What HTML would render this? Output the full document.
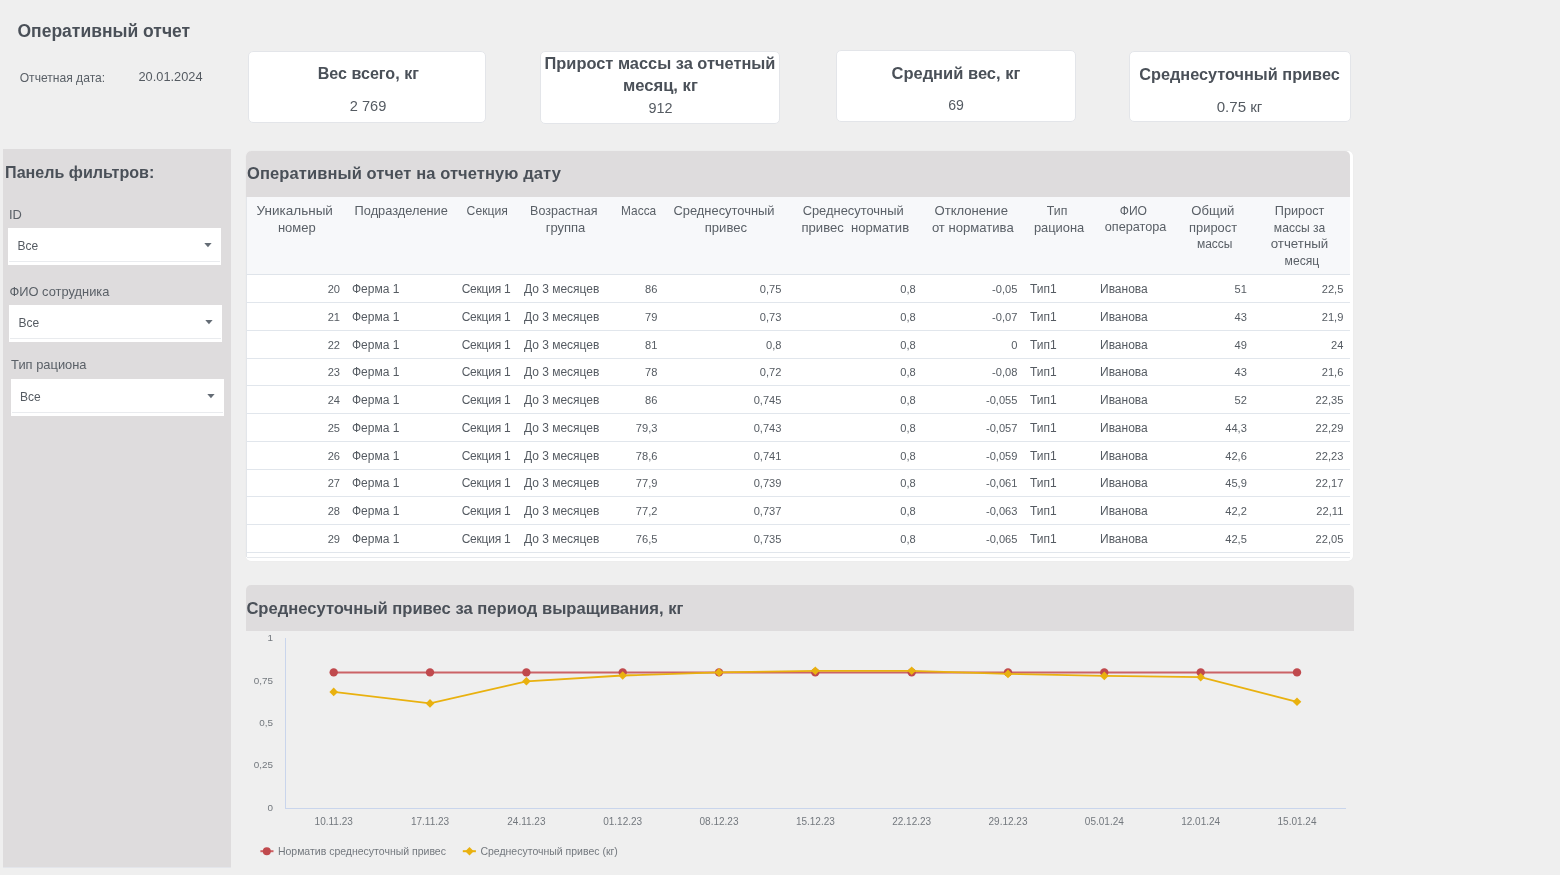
<!DOCTYPE html>
<html><head><meta charset="utf-8"><title>Оперативный отчет</title>
<style>
html,body{margin:0;padding:0;}
body{width:1560px;height:875px;background:#efefef;position:relative;overflow:hidden;font-family:"Liberation Sans",sans-serif;}
.t{position:absolute;white-space:nowrap;}
#root{position:absolute;left:0;top:0;width:1560px;height:875px;will-change:transform;}
.b{position:absolute;}
</style></head><body><div id="root">
<div class="t" style="top:21.33px;font-size:17.5px;line-height:21.0px;color:#4a5058;font-weight:bold;left:17.50px;">Оперативный отчет</div>
<div class="t" style="top:71.14px;font-size:12.1px;line-height:14.52px;color:#5a6067;left:19.70px;">Отчетная дата:</div>
<div class="t" style="top:68.98px;font-size:12.8px;line-height:15.36px;color:#555b62;left:138.50px;">20.01.2024</div>
<div class="b" style="left:248px;top:51px;width:238px;height:72px;background:#fff;border:1px solid #e3e5e9;border-radius:5px;box-sizing:border-box;"></div>
<div class="b" style="left:539.5px;top:51px;width:240.5px;height:72.5px;background:#fff;border:1px solid #e3e5e9;border-radius:5px;box-sizing:border-box;"></div>
<div class="b" style="left:835.5px;top:50px;width:240px;height:72.3px;background:#fff;border:1px solid #e3e5e9;border-radius:5px;box-sizing:border-box;"></div>
<div class="b" style="left:1129px;top:51px;width:221.5px;height:70.6px;background:#fff;border:1px solid #e3e5e9;border-radius:5px;box-sizing:border-box;"></div>
<div class="t" style="top:63.76px;font-size:16.1px;line-height:19.32px;color:#4a5058;font-weight:bold;left:68.30px;width:600px;text-align:center;">Вес всего, кг</div>
<div class="t" style="top:97.88px;font-size:14.6px;line-height:17.52px;color:#555b62;left:68.00px;width:600px;text-align:center;">2 769</div>
<div class="t" style="top:53.77px;font-size:16.4px;line-height:19.68px;color:#4a5058;font-weight:bold;left:360.00px;width:600px;text-align:center;">Прирост массы за отчетный</div>
<div class="t" style="top:76.28px;font-size:16.6px;line-height:19.92px;color:#4a5058;font-weight:bold;left:360.40px;width:600px;text-align:center;">месяц, кг</div>
<div class="t" style="top:99.57px;font-size:14.4px;line-height:17.28px;color:#555b62;left:360.60px;width:600px;text-align:center;">912</div>
<div class="t" style="top:63.58px;font-size:16.5px;line-height:19.8px;color:#4a5058;font-weight:bold;left:655.90px;width:600px;text-align:center;">Средний вес, кг</div>
<div class="t" style="top:97.35px;font-size:14.1px;line-height:16.92px;color:#555b62;left:656.00px;width:600px;text-align:center;">69</div>
<div class="t" style="top:64.87px;font-size:16.3px;line-height:19.56px;color:#4a5058;font-weight:bold;left:939.50px;width:600px;text-align:center;">Среднесуточный привес</div>
<div class="t" style="top:98.30px;font-size:15.1px;line-height:18.12px;color:#555b62;left:939.50px;width:600px;text-align:center;">0.75 кг</div>
<div class="b" style="left:3px;top:149px;width:227.5px;height:718px;background:#dedcdd;box-shadow:0 1px 0 #e3e5ea;"></div>
<div class="t" style="top:162.76px;font-size:16.1px;line-height:19.32px;color:#4a5058;font-weight:bold;left:5.10px;">Панель фильтров:</div>
<div class="t" style="top:206.79px;font-size:12.9px;line-height:15.48px;color:#5a6067;left:9.00px;">ID</div>
<div class="b" style="left:8px;top:228px;width:213px;height:37px;background:#fff;"></div>
<div class="b" style="left:9px;top:261px;width:211px;height:1px;background:#e9ebee;"></div>
<div class="t" style="top:238.94px;font-size:12px;line-height:14.4px;color:#555b62;left:17.50px;">Все</div>
<svg class="b" style="left:203.3px;top:241px" width="10" height="8" viewBox="0 0 10 8"><path d="M1.3 2 L8.6 2 L4.95 6.3 Z" fill="#646c75"/></svg>
<div class="t" style="top:283.69px;font-size:12.9px;line-height:15.48px;color:#5a6067;left:9.40px;">ФИО сотрудника</div>
<div class="b" style="left:9px;top:305px;width:213px;height:37px;background:#fff;"></div>
<div class="b" style="left:10px;top:338px;width:211px;height:1px;background:#e9ebee;"></div>
<div class="t" style="top:315.94px;font-size:12px;line-height:14.4px;color:#555b62;left:18.50px;">Все</div>
<svg class="b" style="left:204.2px;top:318px" width="10" height="8" viewBox="0 0 10 8"><path d="M1.3 2 L8.6 2 L4.95 6.3 Z" fill="#646c75"/></svg>
<div class="t" style="top:357.39px;font-size:12.9px;line-height:15.48px;color:#5a6067;left:11.10px;">Тип рациона</div>
<div class="b" style="left:10.6px;top:379px;width:213px;height:37px;background:#fff;"></div>
<div class="b" style="left:11.6px;top:412px;width:211px;height:1px;background:#e9ebee;"></div>
<div class="t" style="top:389.94px;font-size:12px;line-height:14.4px;color:#555b62;left:20.10px;">Все</div>
<svg class="b" style="left:205.9px;top:392px" width="10" height="8" viewBox="0 0 10 8"><path d="M1.3 2 L8.6 2 L4.95 6.3 Z" fill="#646c75"/></svg>
<div class="b" style="left:246px;top:151px;width:107px;height:410px;background:#fff;border-radius:5px;"></div>
<div class="b" style="left:246px;top:151px;width:1107px;height:410px;background:#fff;border-radius:5px;box-shadow:0 0 1px rgba(0,0,0,0.08);"></div>
<div class="b" style="left:246px;top:190px;width:1px;height:367px;background:#e3e6ea;"></div>
<div class="b" style="left:246px;top:151px;width:1104px;height:46px;background:#dedcdd;border-radius:5px 5px 0 0;"></div>
<div class="t" style="top:163.78px;font-size:16.5px;line-height:19.8px;color:#4a5058;font-weight:bold;letter-spacing:0.1px;left:247.00px;">Оперативный отчет на отчетную дату</div>
<div class="b" style="left:247px;top:197px;width:1103px;height:78px;background:#f7f8fa;"></div>
<div class="b" style="left:247px;top:274px;width:1103px;height:1px;background:#dfe4ea;"></div>
<div class="b" style="left:247px;top:556.5px;width:1103px;height:1px;background:#e6e9ed;"></div>
<div class="t" style="top:202.82px;font-size:13.5px;line-height:16.2px;color:#5a6067;left:-5.25px;width:600px;text-align:center;white-space:pre;">Уникальный</div>
<div class="t" style="top:219.89px;font-size:13.0px;line-height:15.6px;color:#5a6067;left:-3.20px;width:600px;text-align:center;white-space:pre;">номер</div>
<div class="t" style="top:203.48px;font-size:12.8px;line-height:15.36px;color:#5a6067;left:101.25px;width:600px;text-align:center;white-space:pre;">Подразделение</div>
<div class="t" style="top:204.05px;font-size:12.2px;line-height:14.64px;color:#5a6067;left:187.25px;width:600px;text-align:center;white-space:pre;">Секция</div>
<div class="t" style="top:203.77px;font-size:12.5px;line-height:15.0px;color:#5a6067;left:263.75px;width:600px;text-align:center;white-space:pre;">Возрастная</div>
<div class="t" style="top:219.89px;font-size:13.0px;line-height:15.6px;color:#5a6067;left:265.50px;width:600px;text-align:center;white-space:pre;">группа</div>
<div class="t" style="top:204.33px;font-size:11.9px;line-height:14.28px;color:#5a6067;left:338.65px;width:600px;text-align:center;white-space:pre;">Масса</div>
<div class="t" style="top:203.39px;font-size:12.9px;line-height:15.48px;color:#5a6067;left:424.00px;width:600px;text-align:center;white-space:pre;">Среднесуточный</div>
<div class="t" style="top:219.80px;font-size:13.1px;line-height:15.72px;color:#5a6067;left:425.90px;width:600px;text-align:center;white-space:pre;">привес</div>
<div class="t" style="top:203.39px;font-size:12.9px;line-height:15.48px;color:#5a6067;left:553.15px;width:600px;text-align:center;white-space:pre;">Среднесуточный</div>
<div class="t" style="top:219.80px;font-size:13.1px;line-height:15.72px;color:#5a6067;left:555.30px;width:600px;text-align:center;white-space:pre;">привес  норматив</div>
<div class="t" style="top:203.20px;font-size:13.1px;line-height:15.72px;color:#5a6067;left:671.20px;width:600px;text-align:center;white-space:pre;">Отклонение</div>
<div class="t" style="top:219.80px;font-size:13.1px;line-height:15.72px;color:#5a6067;left:672.80px;width:600px;text-align:center;white-space:pre;">от норматива</div>
<div class="t" style="top:203.96px;font-size:12.3px;line-height:14.76px;color:#5a6067;left:757.10px;width:600px;text-align:center;white-space:pre;">Тип</div>
<div class="t" style="top:219.99px;font-size:12.9px;line-height:15.48px;color:#5a6067;left:759.10px;width:600px;text-align:center;white-space:pre;">рациона</div>
<div class="t" style="top:204.14px;font-size:12.1px;line-height:14.52px;color:#5a6067;left:833.40px;width:600px;text-align:center;white-space:pre;">ФИО</div>
<div class="t" style="top:220.18px;font-size:12.7px;line-height:15.24px;color:#5a6067;left:835.60px;width:600px;text-align:center;white-space:pre;">оператора</div>
<div class="t" style="top:203.20px;font-size:13.1px;line-height:15.72px;color:#5a6067;left:912.80px;width:600px;text-align:center;white-space:pre;">Общий</div>
<div class="t" style="top:219.99px;font-size:12.9px;line-height:15.48px;color:#5a6067;left:913.10px;width:600px;text-align:center;white-space:pre;">прирост</div>
<div class="t" style="top:237.44px;font-size:12.0px;line-height:14.4px;color:#5a6067;left:914.70px;width:600px;text-align:center;white-space:pre;">массы</div>
<div class="t" style="top:203.58px;font-size:12.7px;line-height:15.24px;color:#5a6067;left:999.60px;width:600px;text-align:center;white-space:pre;">Прирост</div>
<div class="t" style="top:220.74px;font-size:12.1px;line-height:14.52px;color:#5a6067;left:999.60px;width:600px;text-align:center;white-space:pre;">массы за</div>
<div class="t" style="top:236.21px;font-size:13.3px;line-height:15.96px;color:#5a6067;left:999.50px;width:600px;text-align:center;white-space:pre;">отчетный</div>
<div class="t" style="top:253.94px;font-size:12.1px;line-height:14.52px;color:#5a6067;left:1001.90px;width:600px;text-align:center;white-space:pre;">месяц</div>
<div class="t" style="top:283.09px;font-size:11.1px;line-height:13.32px;color:#555b62;right:1220.00px;">20</div>
<div class="t" style="top:282.24px;font-size:12.0px;line-height:14.4px;color:#555b62;left:352.00px;">Ферма 1</div>
<div class="t" style="top:282.24px;font-size:12.0px;line-height:14.4px;color:#555b62;letter-spacing:-0.24px;left:461.70px;">Секция 1</div>
<div class="t" style="top:282.24px;font-size:12.0px;line-height:14.4px;color:#555b62;left:523.90px;">До 3 месяцев</div>
<div class="t" style="top:283.09px;font-size:11.1px;line-height:13.32px;color:#555b62;right:902.60px;">86</div>
<div class="t" style="top:283.09px;font-size:11.1px;line-height:13.32px;color:#555b62;right:778.60px;">0,75</div>
<div class="t" style="top:283.09px;font-size:11.1px;line-height:13.32px;color:#555b62;right:644.30px;">0,8</div>
<div class="t" style="top:283.09px;font-size:11.1px;line-height:13.32px;color:#555b62;right:542.60px;">-0,05</div>
<div class="t" style="top:282.24px;font-size:12.0px;line-height:14.4px;color:#555b62;left:1030.00px;">Тип1</div>
<div class="t" style="top:282.24px;font-size:12.0px;line-height:14.4px;color:#555b62;left:1100.00px;">Иванова</div>
<div class="t" style="top:283.09px;font-size:11.1px;line-height:13.32px;color:#555b62;right:313.20px;">51</div>
<div class="t" style="top:283.09px;font-size:11.1px;line-height:13.32px;color:#555b62;right:216.70px;">22,5</div>
<div class="b" style="left:247px;top:302.05px;width:1103px;height:1px;background:#e1e6ec;"></div>
<div class="t" style="top:310.84px;font-size:11.1px;line-height:13.32px;color:#555b62;right:1220.00px;">21</div>
<div class="t" style="top:309.99px;font-size:12.0px;line-height:14.4px;color:#555b62;left:352.00px;">Ферма 1</div>
<div class="t" style="top:309.99px;font-size:12.0px;line-height:14.4px;color:#555b62;letter-spacing:-0.24px;left:461.70px;">Секция 1</div>
<div class="t" style="top:309.99px;font-size:12.0px;line-height:14.4px;color:#555b62;left:523.90px;">До 3 месяцев</div>
<div class="t" style="top:310.84px;font-size:11.1px;line-height:13.32px;color:#555b62;right:902.60px;">79</div>
<div class="t" style="top:310.84px;font-size:11.1px;line-height:13.32px;color:#555b62;right:778.60px;">0,73</div>
<div class="t" style="top:310.84px;font-size:11.1px;line-height:13.32px;color:#555b62;right:644.30px;">0,8</div>
<div class="t" style="top:310.84px;font-size:11.1px;line-height:13.32px;color:#555b62;right:542.60px;">-0,07</div>
<div class="t" style="top:309.99px;font-size:12.0px;line-height:14.4px;color:#555b62;left:1030.00px;">Тип1</div>
<div class="t" style="top:309.99px;font-size:12.0px;line-height:14.4px;color:#555b62;left:1100.00px;">Иванова</div>
<div class="t" style="top:310.84px;font-size:11.1px;line-height:13.32px;color:#555b62;right:313.20px;">43</div>
<div class="t" style="top:310.84px;font-size:11.1px;line-height:13.32px;color:#555b62;right:216.70px;">21,9</div>
<div class="b" style="left:247px;top:329.8px;width:1103px;height:1px;background:#e1e6ec;"></div>
<div class="t" style="top:338.59px;font-size:11.1px;line-height:13.32px;color:#555b62;right:1220.00px;">22</div>
<div class="t" style="top:337.74px;font-size:12.0px;line-height:14.4px;color:#555b62;left:352.00px;">Ферма 1</div>
<div class="t" style="top:337.74px;font-size:12.0px;line-height:14.4px;color:#555b62;letter-spacing:-0.24px;left:461.70px;">Секция 1</div>
<div class="t" style="top:337.74px;font-size:12.0px;line-height:14.4px;color:#555b62;left:523.90px;">До 3 месяцев</div>
<div class="t" style="top:338.59px;font-size:11.1px;line-height:13.32px;color:#555b62;right:902.60px;">81</div>
<div class="t" style="top:338.59px;font-size:11.1px;line-height:13.32px;color:#555b62;right:778.60px;">0,8</div>
<div class="t" style="top:338.59px;font-size:11.1px;line-height:13.32px;color:#555b62;right:644.30px;">0,8</div>
<div class="t" style="top:338.59px;font-size:11.1px;line-height:13.32px;color:#555b62;right:542.60px;">0</div>
<div class="t" style="top:337.74px;font-size:12.0px;line-height:14.4px;color:#555b62;left:1030.00px;">Тип1</div>
<div class="t" style="top:337.74px;font-size:12.0px;line-height:14.4px;color:#555b62;left:1100.00px;">Иванова</div>
<div class="t" style="top:338.59px;font-size:11.1px;line-height:13.32px;color:#555b62;right:313.20px;">49</div>
<div class="t" style="top:338.59px;font-size:11.1px;line-height:13.32px;color:#555b62;right:216.70px;">24</div>
<div class="b" style="left:247px;top:357.55px;width:1103px;height:1px;background:#e1e6ec;"></div>
<div class="t" style="top:366.34px;font-size:11.1px;line-height:13.32px;color:#555b62;right:1220.00px;">23</div>
<div class="t" style="top:365.49px;font-size:12.0px;line-height:14.4px;color:#555b62;left:352.00px;">Ферма 1</div>
<div class="t" style="top:365.49px;font-size:12.0px;line-height:14.4px;color:#555b62;letter-spacing:-0.24px;left:461.70px;">Секция 1</div>
<div class="t" style="top:365.49px;font-size:12.0px;line-height:14.4px;color:#555b62;left:523.90px;">До 3 месяцев</div>
<div class="t" style="top:366.34px;font-size:11.1px;line-height:13.32px;color:#555b62;right:902.60px;">78</div>
<div class="t" style="top:366.34px;font-size:11.1px;line-height:13.32px;color:#555b62;right:778.60px;">0,72</div>
<div class="t" style="top:366.34px;font-size:11.1px;line-height:13.32px;color:#555b62;right:644.30px;">0,8</div>
<div class="t" style="top:366.34px;font-size:11.1px;line-height:13.32px;color:#555b62;right:542.60px;">-0,08</div>
<div class="t" style="top:365.49px;font-size:12.0px;line-height:14.4px;color:#555b62;left:1030.00px;">Тип1</div>
<div class="t" style="top:365.49px;font-size:12.0px;line-height:14.4px;color:#555b62;left:1100.00px;">Иванова</div>
<div class="t" style="top:366.34px;font-size:11.1px;line-height:13.32px;color:#555b62;right:313.20px;">43</div>
<div class="t" style="top:366.34px;font-size:11.1px;line-height:13.32px;color:#555b62;right:216.70px;">21,6</div>
<div class="b" style="left:247px;top:385.3px;width:1103px;height:1px;background:#e1e6ec;"></div>
<div class="t" style="top:394.09px;font-size:11.1px;line-height:13.32px;color:#555b62;right:1220.00px;">24</div>
<div class="t" style="top:393.24px;font-size:12.0px;line-height:14.4px;color:#555b62;left:352.00px;">Ферма 1</div>
<div class="t" style="top:393.24px;font-size:12.0px;line-height:14.4px;color:#555b62;letter-spacing:-0.24px;left:461.70px;">Секция 1</div>
<div class="t" style="top:393.24px;font-size:12.0px;line-height:14.4px;color:#555b62;left:523.90px;">До 3 месяцев</div>
<div class="t" style="top:394.09px;font-size:11.1px;line-height:13.32px;color:#555b62;right:902.60px;">86</div>
<div class="t" style="top:394.09px;font-size:11.1px;line-height:13.32px;color:#555b62;right:778.60px;">0,745</div>
<div class="t" style="top:394.09px;font-size:11.1px;line-height:13.32px;color:#555b62;right:644.30px;">0,8</div>
<div class="t" style="top:394.09px;font-size:11.1px;line-height:13.32px;color:#555b62;right:542.60px;">-0,055</div>
<div class="t" style="top:393.24px;font-size:12.0px;line-height:14.4px;color:#555b62;left:1030.00px;">Тип1</div>
<div class="t" style="top:393.24px;font-size:12.0px;line-height:14.4px;color:#555b62;left:1100.00px;">Иванова</div>
<div class="t" style="top:394.09px;font-size:11.1px;line-height:13.32px;color:#555b62;right:313.20px;">52</div>
<div class="t" style="top:394.09px;font-size:11.1px;line-height:13.32px;color:#555b62;right:216.70px;">22,35</div>
<div class="b" style="left:247px;top:413.05px;width:1103px;height:1px;background:#e1e6ec;"></div>
<div class="t" style="top:421.84px;font-size:11.1px;line-height:13.32px;color:#555b62;right:1220.00px;">25</div>
<div class="t" style="top:420.99px;font-size:12.0px;line-height:14.4px;color:#555b62;left:352.00px;">Ферма 1</div>
<div class="t" style="top:420.99px;font-size:12.0px;line-height:14.4px;color:#555b62;letter-spacing:-0.24px;left:461.70px;">Секция 1</div>
<div class="t" style="top:420.99px;font-size:12.0px;line-height:14.4px;color:#555b62;left:523.90px;">До 3 месяцев</div>
<div class="t" style="top:421.84px;font-size:11.1px;line-height:13.32px;color:#555b62;right:902.60px;">79,3</div>
<div class="t" style="top:421.84px;font-size:11.1px;line-height:13.32px;color:#555b62;right:778.60px;">0,743</div>
<div class="t" style="top:421.84px;font-size:11.1px;line-height:13.32px;color:#555b62;right:644.30px;">0,8</div>
<div class="t" style="top:421.84px;font-size:11.1px;line-height:13.32px;color:#555b62;right:542.60px;">-0,057</div>
<div class="t" style="top:420.99px;font-size:12.0px;line-height:14.4px;color:#555b62;left:1030.00px;">Тип1</div>
<div class="t" style="top:420.99px;font-size:12.0px;line-height:14.4px;color:#555b62;left:1100.00px;">Иванова</div>
<div class="t" style="top:421.84px;font-size:11.1px;line-height:13.32px;color:#555b62;right:313.20px;">44,3</div>
<div class="t" style="top:421.84px;font-size:11.1px;line-height:13.32px;color:#555b62;right:216.70px;">22,29</div>
<div class="b" style="left:247px;top:440.8px;width:1103px;height:1px;background:#e1e6ec;"></div>
<div class="t" style="top:449.59px;font-size:11.1px;line-height:13.32px;color:#555b62;right:1220.00px;">26</div>
<div class="t" style="top:448.74px;font-size:12.0px;line-height:14.4px;color:#555b62;left:352.00px;">Ферма 1</div>
<div class="t" style="top:448.74px;font-size:12.0px;line-height:14.4px;color:#555b62;letter-spacing:-0.24px;left:461.70px;">Секция 1</div>
<div class="t" style="top:448.74px;font-size:12.0px;line-height:14.4px;color:#555b62;left:523.90px;">До 3 месяцев</div>
<div class="t" style="top:449.59px;font-size:11.1px;line-height:13.32px;color:#555b62;right:902.60px;">78,6</div>
<div class="t" style="top:449.59px;font-size:11.1px;line-height:13.32px;color:#555b62;right:778.60px;">0,741</div>
<div class="t" style="top:449.59px;font-size:11.1px;line-height:13.32px;color:#555b62;right:644.30px;">0,8</div>
<div class="t" style="top:449.59px;font-size:11.1px;line-height:13.32px;color:#555b62;right:542.60px;">-0,059</div>
<div class="t" style="top:448.74px;font-size:12.0px;line-height:14.4px;color:#555b62;left:1030.00px;">Тип1</div>
<div class="t" style="top:448.74px;font-size:12.0px;line-height:14.4px;color:#555b62;left:1100.00px;">Иванова</div>
<div class="t" style="top:449.59px;font-size:11.1px;line-height:13.32px;color:#555b62;right:313.20px;">42,6</div>
<div class="t" style="top:449.59px;font-size:11.1px;line-height:13.32px;color:#555b62;right:216.70px;">22,23</div>
<div class="b" style="left:247px;top:468.55px;width:1103px;height:1px;background:#e1e6ec;"></div>
<div class="t" style="top:477.34px;font-size:11.1px;line-height:13.32px;color:#555b62;right:1220.00px;">27</div>
<div class="t" style="top:476.49px;font-size:12.0px;line-height:14.4px;color:#555b62;left:352.00px;">Ферма 1</div>
<div class="t" style="top:476.49px;font-size:12.0px;line-height:14.4px;color:#555b62;letter-spacing:-0.24px;left:461.70px;">Секция 1</div>
<div class="t" style="top:476.49px;font-size:12.0px;line-height:14.4px;color:#555b62;left:523.90px;">До 3 месяцев</div>
<div class="t" style="top:477.34px;font-size:11.1px;line-height:13.32px;color:#555b62;right:902.60px;">77,9</div>
<div class="t" style="top:477.34px;font-size:11.1px;line-height:13.32px;color:#555b62;right:778.60px;">0,739</div>
<div class="t" style="top:477.34px;font-size:11.1px;line-height:13.32px;color:#555b62;right:644.30px;">0,8</div>
<div class="t" style="top:477.34px;font-size:11.1px;line-height:13.32px;color:#555b62;right:542.60px;">-0,061</div>
<div class="t" style="top:476.49px;font-size:12.0px;line-height:14.4px;color:#555b62;left:1030.00px;">Тип1</div>
<div class="t" style="top:476.49px;font-size:12.0px;line-height:14.4px;color:#555b62;left:1100.00px;">Иванова</div>
<div class="t" style="top:477.34px;font-size:11.1px;line-height:13.32px;color:#555b62;right:313.20px;">45,9</div>
<div class="t" style="top:477.34px;font-size:11.1px;line-height:13.32px;color:#555b62;right:216.70px;">22,17</div>
<div class="b" style="left:247px;top:496.3px;width:1103px;height:1px;background:#e1e6ec;"></div>
<div class="t" style="top:505.09px;font-size:11.1px;line-height:13.32px;color:#555b62;right:1220.00px;">28</div>
<div class="t" style="top:504.24px;font-size:12.0px;line-height:14.4px;color:#555b62;left:352.00px;">Ферма 1</div>
<div class="t" style="top:504.24px;font-size:12.0px;line-height:14.4px;color:#555b62;letter-spacing:-0.24px;left:461.70px;">Секция 1</div>
<div class="t" style="top:504.24px;font-size:12.0px;line-height:14.4px;color:#555b62;left:523.90px;">До 3 месяцев</div>
<div class="t" style="top:505.09px;font-size:11.1px;line-height:13.32px;color:#555b62;right:902.60px;">77,2</div>
<div class="t" style="top:505.09px;font-size:11.1px;line-height:13.32px;color:#555b62;right:778.60px;">0,737</div>
<div class="t" style="top:505.09px;font-size:11.1px;line-height:13.32px;color:#555b62;right:644.30px;">0,8</div>
<div class="t" style="top:505.09px;font-size:11.1px;line-height:13.32px;color:#555b62;right:542.60px;">-0,063</div>
<div class="t" style="top:504.24px;font-size:12.0px;line-height:14.4px;color:#555b62;left:1030.00px;">Тип1</div>
<div class="t" style="top:504.24px;font-size:12.0px;line-height:14.4px;color:#555b62;left:1100.00px;">Иванова</div>
<div class="t" style="top:505.09px;font-size:11.1px;line-height:13.32px;color:#555b62;right:313.20px;">42,2</div>
<div class="t" style="top:505.09px;font-size:11.1px;line-height:13.32px;color:#555b62;right:216.70px;">22,11</div>
<div class="b" style="left:247px;top:524.05px;width:1103px;height:1px;background:#e1e6ec;"></div>
<div class="t" style="top:532.84px;font-size:11.1px;line-height:13.32px;color:#555b62;right:1220.00px;">29</div>
<div class="t" style="top:531.99px;font-size:12.0px;line-height:14.4px;color:#555b62;left:352.00px;">Ферма 1</div>
<div class="t" style="top:531.99px;font-size:12.0px;line-height:14.4px;color:#555b62;letter-spacing:-0.24px;left:461.70px;">Секция 1</div>
<div class="t" style="top:531.99px;font-size:12.0px;line-height:14.4px;color:#555b62;left:523.90px;">До 3 месяцев</div>
<div class="t" style="top:532.84px;font-size:11.1px;line-height:13.32px;color:#555b62;right:902.60px;">76,5</div>
<div class="t" style="top:532.84px;font-size:11.1px;line-height:13.32px;color:#555b62;right:778.60px;">0,735</div>
<div class="t" style="top:532.84px;font-size:11.1px;line-height:13.32px;color:#555b62;right:644.30px;">0,8</div>
<div class="t" style="top:532.84px;font-size:11.1px;line-height:13.32px;color:#555b62;right:542.60px;">-0,065</div>
<div class="t" style="top:531.99px;font-size:12.0px;line-height:14.4px;color:#555b62;left:1030.00px;">Тип1</div>
<div class="t" style="top:531.99px;font-size:12.0px;line-height:14.4px;color:#555b62;left:1100.00px;">Иванова</div>
<div class="t" style="top:532.84px;font-size:11.1px;line-height:13.32px;color:#555b62;right:313.20px;">42,5</div>
<div class="t" style="top:532.84px;font-size:11.1px;line-height:13.32px;color:#555b62;right:216.70px;">22,05</div>
<div class="b" style="left:247px;top:551.8px;width:1103px;height:1px;background:#e1e6ec;"></div>
<div class="b" style="left:246px;top:585px;width:1108px;height:46px;background:#dedcdd;border-radius:5px 5px 0 0;"></div>
<div class="t" style="top:599.08px;font-size:16.6px;line-height:19.92px;color:#4a5058;font-weight:bold;left:246.40px;">Среднесуточный привес за период выращивания, кг</div>
<svg class="b" style="left:0;top:0" width="1560" height="875" viewBox="0 0 1560 875"><line x1="285.5" y1="638" x2="285.5" y2="808.5" stroke="#c9d5ec" stroke-width="1"/><line x1="285" y1="808.5" x2="1346" y2="808.5" stroke="#c9d5ec" stroke-width="1"/><polyline points="333.7,672.4 430.0,672.4 526.4,672.4 622.7,672.4 719.0,672.4 815.3,672.4 911.7,672.4 1008.0,672.4 1104.3,672.4 1200.7,672.4 1297.0,672.4" fill="none" stroke="#cb6266" stroke-width="2"/><circle cx="333.7" cy="672.4" r="4.2" fill="#c0494d"/><circle cx="430.0" cy="672.4" r="4.2" fill="#c0494d"/><circle cx="526.4" cy="672.4" r="4.2" fill="#c0494d"/><circle cx="622.7" cy="672.4" r="4.2" fill="#c0494d"/><circle cx="719.0" cy="672.4" r="4.2" fill="#c0494d"/><circle cx="815.3" cy="672.4" r="4.2" fill="#c0494d"/><circle cx="911.7" cy="672.4" r="4.2" fill="#c0494d"/><circle cx="1008.0" cy="672.4" r="4.2" fill="#c0494d"/><circle cx="1104.3" cy="672.4" r="4.2" fill="#c0494d"/><circle cx="1200.7" cy="672.4" r="4.2" fill="#c0494d"/><circle cx="1297.0" cy="672.4" r="4.2" fill="#c0494d"/><polyline points="333.7,691.9 430.0,703.4 526.4,681.3 622.7,675.5 719.0,672.4 815.3,670.8 911.7,670.8 1008.0,673.9 1104.3,675.9 1200.7,677.2 1297.0,701.8" fill="none" stroke="#e9b10f" stroke-width="1.8"/><path d="M333.7 687.6 L338.0 691.9 L333.7 696.2 L329.4 691.9 Z" fill="#e9b10f"/><path d="M430.0 699.1 L434.3 703.4 L430.0 707.7 L425.7 703.4 Z" fill="#e9b10f"/><path d="M526.4 677.0 L530.7 681.3 L526.4 685.6 L522.1 681.3 Z" fill="#e9b10f"/><path d="M622.7 671.2 L627.0 675.5 L622.7 679.8 L618.4 675.5 Z" fill="#e9b10f"/><path d="M719.0 668.1 L723.3 672.4 L719.0 676.7 L714.7 672.4 Z" fill="#e9b10f"/><path d="M815.3 666.5 L819.6 670.8 L815.3 675.1 L811.0 670.8 Z" fill="#e9b10f"/><path d="M911.7 666.5 L916.0 670.8 L911.7 675.1 L907.4 670.8 Z" fill="#e9b10f"/><path d="M1008.0 669.6 L1012.3 673.9 L1008.0 678.2 L1003.7 673.9 Z" fill="#e9b10f"/><path d="M1104.3 671.6 L1108.6 675.9 L1104.3 680.2 L1100.0 675.9 Z" fill="#e9b10f"/><path d="M1200.7 672.9 L1205.0 677.2 L1200.7 681.5 L1196.4 677.2 Z" fill="#e9b10f"/><path d="M1297.0 697.5 L1301.3 701.8 L1297.0 706.1 L1292.7 701.8 Z" fill="#e9b10f"/><line x1="260.4" y1="851.2" x2="273.5" y2="851.2" stroke="#cd5f63" stroke-width="2"/><circle cx="266.8" cy="851.2" r="4" fill="#c0494d"/><line x1="462.8" y1="851.2" x2="475.9" y2="851.2" stroke="#e9b10f" stroke-width="2"/><path d="M469.5 847 L473.7 851.2 L469.5 855.4 L465.3 851.2 Z" fill="#e9b10f"/></svg>
<div class="t" style="top:632.23px;font-size:9.9px;line-height:11.88px;color:#73787e;right:1287.00px;">1</div>
<div class="t" style="top:674.63px;font-size:9.9px;line-height:11.88px;color:#73787e;right:1287.00px;">0,75</div>
<div class="t" style="top:717.03px;font-size:9.9px;line-height:11.88px;color:#73787e;right:1287.00px;">0,5</div>
<div class="t" style="top:759.43px;font-size:9.9px;line-height:11.88px;color:#73787e;right:1287.00px;">0,25</div>
<div class="t" style="top:801.83px;font-size:9.9px;line-height:11.88px;color:#73787e;right:1287.00px;">0</div>
<div class="t" style="top:815.73px;font-size:10px;line-height:12.0px;color:#73787e;left:33.70px;width:600px;text-align:center;">10.11.23</div>
<div class="t" style="top:815.73px;font-size:10px;line-height:12.0px;color:#73787e;left:130.03px;width:600px;text-align:center;">17.11.23</div>
<div class="t" style="top:815.73px;font-size:10px;line-height:12.0px;color:#73787e;left:226.36px;width:600px;text-align:center;">24.11.23</div>
<div class="t" style="top:815.73px;font-size:10px;line-height:12.0px;color:#73787e;left:322.69px;width:600px;text-align:center;">01.12.23</div>
<div class="t" style="top:815.73px;font-size:10px;line-height:12.0px;color:#73787e;left:419.02px;width:600px;text-align:center;">08.12.23</div>
<div class="t" style="top:815.73px;font-size:10px;line-height:12.0px;color:#73787e;left:515.35px;width:600px;text-align:center;">15.12.23</div>
<div class="t" style="top:815.73px;font-size:10px;line-height:12.0px;color:#73787e;left:611.68px;width:600px;text-align:center;">22.12.23</div>
<div class="t" style="top:815.73px;font-size:10px;line-height:12.0px;color:#73787e;left:708.01px;width:600px;text-align:center;">29.12.23</div>
<div class="t" style="top:815.73px;font-size:10px;line-height:12.0px;color:#73787e;left:804.34px;width:600px;text-align:center;">05.01.24</div>
<div class="t" style="top:815.73px;font-size:10px;line-height:12.0px;color:#73787e;left:900.67px;width:600px;text-align:center;">12.01.24</div>
<div class="t" style="top:815.73px;font-size:10px;line-height:12.0px;color:#73787e;left:997.00px;width:600px;text-align:center;">15.01.24</div>
<div class="t" style="top:844.76px;font-size:10.5px;line-height:12.6px;color:#73787e;left:277.90px;">Норматив среднесуточный привес</div>
<div class="t" style="top:844.76px;font-size:10.5px;line-height:12.6px;color:#73787e;left:480.40px;">Среднесуточный привес (кг)</div>
</div></body></html>
